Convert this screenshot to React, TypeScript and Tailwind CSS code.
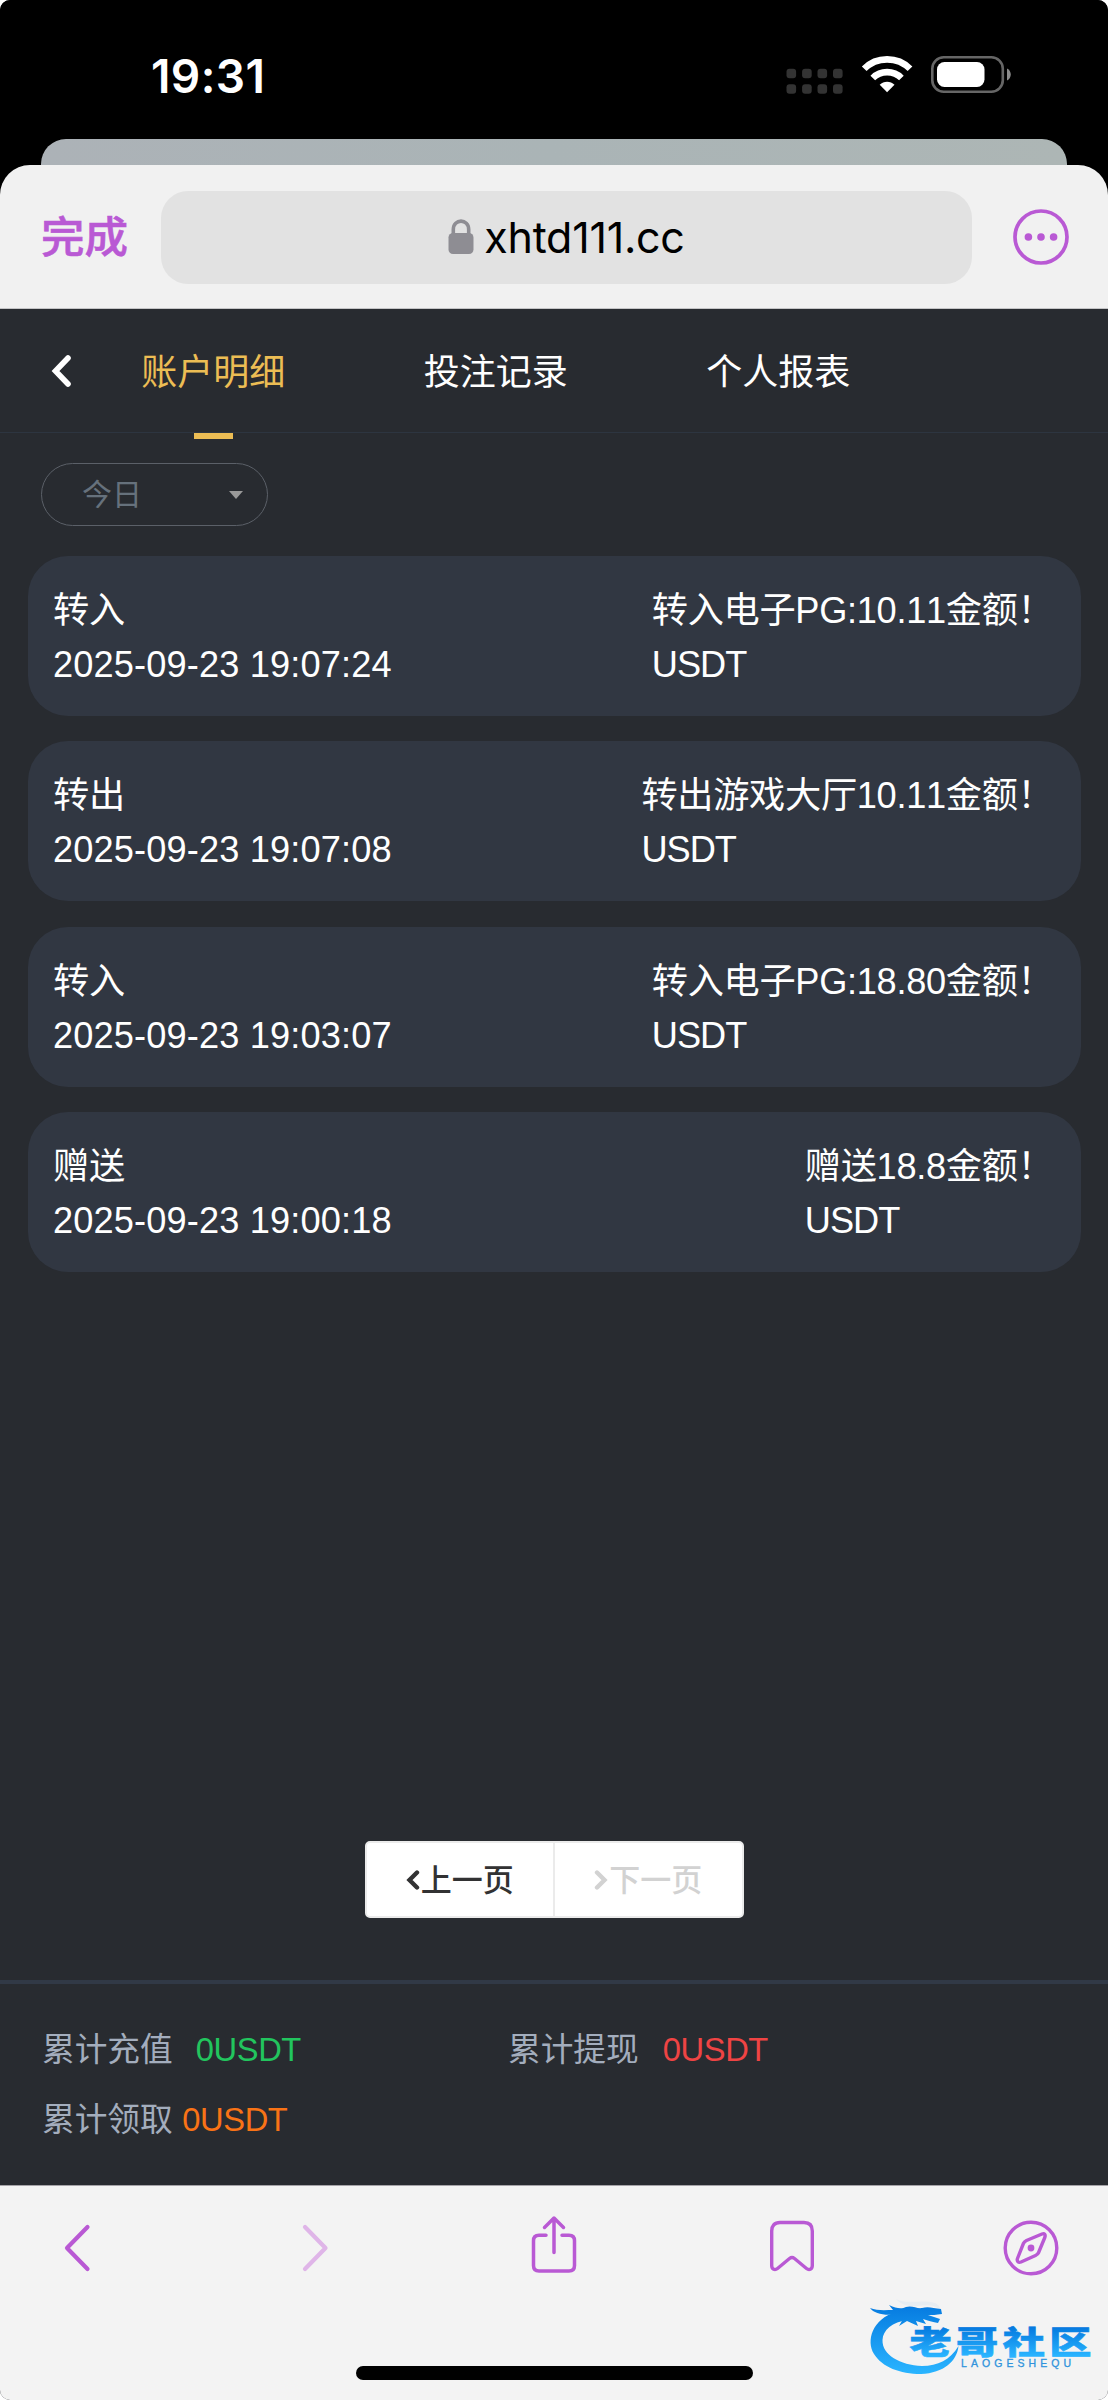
import { clsx } from "clsx";

type RecordItem = {
  type: string;
  time: string;
  text: string;
};

const tabs = ["账户明细", "投注记录", "个人报表"];

const records: RecordItem[] = [
  { type: "转入", time: "2025-09-23 19:07:24", text: "转入电子PG:10.11金额！" },
  { type: "转出", time: "2025-09-23 19:07:08", text: "转出游戏大厅10.11金额！" },
  { type: "转入", time: "2025-09-23 19:03:07", text: "转入电子PG:18.80金额！" },
  { type: "赠送", time: "2025-09-23 19:00:18", text: "赠送18.8金额！" },
];

function StatusBar() {
  return (
    <div className="flex h-[139px] items-start justify-between bg-black pr-[97px] pl-[151px]">
      <div className="mt-[48px] font-[Inter,sans-serif] text-[46px] leading-[56px] font-semibold tracking-[0.4px] text-white">
        19:31
      </div>
      <div className="mt-[54px] flex">
        <svg width="58" height="42" viewBox="0 0 58 42" fill="#333333">
          {[0, 15.6, 31, 46.5].map((x) => (
            <g key={x}>
              <rect x={x + 0.5} y="14.8" width="9.6" height="9.4" rx="3" />
              <rect x={x + 0.5} y="30.3" width="9.6" height="9.4" rx="3" />
            </g>
          ))}
        </svg>
        <svg className="ml-[17px]" width="52" height="42" viewBox="0 0 52 42">
          <g fill="none" stroke="#fff" strokeWidth="6.6">
            <path d="M3.2 14.8C15.6 2.2 36.6 2.2 49 14.8" />
            <path d="M11.8 24C19.6 16.2 32.6 16.2 40.4 24" />
          </g>
          <path d="M26.1 38.2L18.7 30.8C22.7 26.6 29.5 26.6 33.5 30.8Z" fill="#fff" />
        </svg>
        <svg className="ml-[18px]" width="80" height="42" viewBox="0 0 80 42">
          <rect x="1.3" y="3.2" width="70.5" height="34.6" rx="11.5" fill="none" stroke="#666" strokeWidth="2.6" />
          <rect x="6" y="8" width="47.5" height="25" rx="7.5" fill="#fff" />
          <path d="M76 14.5C81 16.5 81 24.5 76 26.5Z" fill="#8c8c8c" />
        </svg>
      </div>
    </div>
  );
}

function AddressBar() {
  return (
    <div className="h-[170px] bg-black">
      <div className="mx-[41px] h-[50px] rounded-t-[25px] bg-linear-to-r from-[#acb2b7] via-[#aab4b6] to-[#adb6b5]" />
      <div className="-mt-[24px] flex h-[144px] items-start rounded-t-[30px] border-b border-[#c4c4c6] bg-[#f1f1f1] pt-[26px]">
        <div className="ml-[41px] w-[120px] font-['Noto_Sans_CJK_SC',sans-serif] text-[43.5px] leading-[87px] font-medium text-[#b959d4] [-webkit-text-stroke:0.6px_#b959d4]">
          完成
        </div>
        <div className="flex h-[92.5px] w-[811px] items-center justify-center rounded-[27px] bg-[#e2e2e2]">
          <svg className="mr-[10px]" width="26" height="36" viewBox="0 0 26 36">
            <rect x="0.5" y="14" width="25" height="21" rx="4.5" fill="#8e8d93" />
            <path d="M5.3 16V10.5C5.3 -0.7 20.7 -0.7 20.7 10.5V16" fill="none" stroke="#8e8d93" strokeWidth="3.6" />
          </svg>
          <span className="font-[Inter,sans-serif] text-[43px] tracking-[-0.25px] text-black">xhtd111.cc</span>
        </div>
        <svg className="mt-[17px] ml-[40px]" width="58" height="58" viewBox="0 0 58 58" fill="#b959d4">
          <circle cx="29" cy="29" r="26" fill="none" stroke="#b959d4" strokeWidth="3.7" />
          <circle cx="16.4" cy="29" r="3.8" />
          <circle cx="29" cy="29" r="3.8" />
          <circle cx="41.6" cy="29" r="3.8" />
        </svg>
      </div>
    </div>
  );
}

function TabHeader() {
  return (
    <div className="flex h-[124px] border-b border-[#2d3540]">
      <svg className="mt-[45px] ml-[50px]" width="22" height="34" viewBox="0 0 22 34">
        <path d="M18 4L5.5 17L18 30" fill="none" stroke="#fff" strokeWidth="5.6" strokeLinecap="round" />
      </svg>
      {tabs.map((tab, i) => (
        <div
          key={tab}
          className={clsx(
            "relative flex w-[282.5px] justify-center text-[36px] leading-[128px]",
            i === 0 ? "text-[#ecbd54]" : "text-white"
          )}
        >
          {tab}
          {i === 0 && <span className="absolute -bottom-[7px] h-[6px] w-[39px] bg-[#ecbd54]" />}
        </div>
      ))}
    </div>
  );
}

function RecordCard({ item }: { item: RecordItem }) {
  return (
    <div className="flex h-[160px] justify-between rounded-[40px] bg-[#313742] pt-[28px] pr-[27px] pl-[25.5px] text-[36.2px] leading-[54px] text-white [font-kerning:none]">
      <div>
        <div className="tracking-[-0.3px]">{item.type}</div>
        <div className="tracking-[0.15px]">{item.time}</div>
      </div>
      <div>
        <div className="tracking-[-0.3px]">{item.text}</div>
        <div className="tracking-[-1px]">USDT</div>
      </div>
    </div>
  );
}

function Pagination() {
  return (
    <div className="mx-auto flex h-[77px] w-[379px] rounded-[5px] border-[2.5px] border-[#ebebeb] bg-white text-[31px] leading-[70px] font-medium">
      <div className="flex flex-1 items-center justify-center border-r-[2.5px] border-[#ebebeb] text-[#323233]">
        <svg className="mr-px" width="14" height="22" viewBox="0 0 14 22">
          <path d="M11 3.5L3.5 11L11 18.5" fill="none" stroke="currentColor" strokeWidth="4.4" strokeLinecap="round" />
        </svg>
        <span className="pt-[2px]">上一页</span>
      </div>
      <div className="flex flex-1 items-center justify-center text-[#d2d2d2]">
        <svg className="mr-px" width="14" height="22" viewBox="0 0 14 22">
          <path d="M3 3.5L10.5 11L3 18.5" fill="none" stroke="currentColor" strokeWidth="4.4" strokeLinecap="round" />
        </svg>
        <span className="pt-[2px]">下一页</span>
      </div>
    </div>
  );
}

function Totals() {
  return (
    <div className="h-[205px] border-t-4 border-[#313946] pt-[31px] pl-[42px] text-[32.7px] leading-[69.5px] text-[#a3adbd]">
      <div className="flex">
        <div className="w-[466px]">
          累计充值<span className="ml-[23px] tracking-[-0.4px] text-[#22c55e]">0USDT</span>
        </div>
        <div>
          累计提现<span className="ml-[24px] tracking-[-0.4px] text-[#ef4444]">0USDT</span>
        </div>
      </div>
      <div>
        累计领取<span className="ml-[9.5px] tracking-[-0.4px] text-[#f97316]">0USDT</span>
      </div>
    </div>
  );
}

function Watermark() {
  return (
    <svg className="absolute right-0 bottom-0" width="248" height="110" viewBox="860 2290 248 110">
      <defs>
        <linearGradient id="ring" gradientUnits="userSpaceOnUse" x1="0" y1="2306" x2="0" y2="2373">
          <stop offset="0" stopColor="#067be0" />
          <stop offset="1" stopColor="#29b4ff" />
        </linearGradient>
        <linearGradient id="word" gradientUnits="userSpaceOnUse" x1="0" y1="-26" x2="0" y2="2">
          <stop offset="0" stopColor="#067be0" />
          <stop offset="1" stopColor="#29b4ff" />
        </linearGradient>
      </defs>
      <g fill="url(#ring)">
        <path d="M896 2312C872 2319 866 2341 874 2354C882 2367 900 2374 921 2374C944 2373 957 2361 958.5 2346C950 2360 938 2366 922 2366C900 2365 882 2355 882.5 2340C883 2330 892 2322 908 2320Z" />
        <path d="M870 2308C877 2311 886 2310 893 2310L889 2305C897 2309 902 2309 906 2307C912 2305 917 2309 922 2308C928 2306 933 2308 941 2309L942 2314C936 2315 932 2315 928 2315L940 2319L938 2323C931 2322 927 2320 923 2319L926 2324L916 2321L918 2326L907 2321L899 2326L903 2319L890 2322L897 2314C886 2316 874 2314 870 2308Z" />
        <path d="M896 2299C907 2305 921 2299 935 2303C939 2305 941 2308 940 2310C934 2304 925 2305 917 2306C908 2307 900 2304 896 2299Z" opacity="0.05" />
      </g>
      <text
        transform="translate(909.5 2354) scale(1.34 1)"
        className="font-['Noto_Sans_CJK_SC',sans-serif] text-[31.5px] font-black"
        fill="url(#word)"
        stroke="url(#word)"
        strokeWidth="0.6"
        letterSpacing="3.3"
      >
        老哥社区
      </text>
      <text
        x="961"
        y="2366.5"
        className="font-['Liberation_Sans',sans-serif] text-[10.5px]"
        fill="#2f93dc"
        stroke="#2f93dc"
        strokeWidth="0.3"
        textLength="110"
      >
        LAOGESHEQU
      </text>
    </svg>
  );
}

function Toolbar() {
  return (
    <div className="relative h-[215px] border-t border-[#a5a3a8] bg-[#f3f3f3]">
      <div className="flex items-start pt-[29px] text-[#b959d4]">
        <svg className="ml-[61px]" width="32" height="66" viewBox="0 0 32 66">
          <path d="M26.5 12L6 33L26.5 54" fill="none" stroke="currentColor" strokeWidth="4.2" strokeLinecap="round" strokeLinejoin="round" />
        </svg>
        <svg className="ml-[207px]" width="32" height="66" viewBox="0 0 32 66">
          <path d="M5 12L25.5 33L5 54" fill="none" stroke="#dfb5e8" strokeWidth="4.2" strokeLinecap="round" strokeLinejoin="round" />
        </svg>
        <svg className="ml-[199px]" width="46" height="66" viewBox="0 0 46 66">
          <g fill="none" stroke="currentColor" strokeWidth="3.5" strokeLinecap="round" strokeLinejoin="round">
            <path d="M15 20.3H8C4.5 20.3 2.5 22.3 2.5 25.8V50.5C2.5 54 4.5 56 8 56H38C41.5 56 43.5 54 43.5 50.5V25.8C43.5 22.3 41.5 20.3 38 20.3H31" />
            <path d="M23 37.5V4M13.5 12.5L23 3L32.5 12.5" />
          </g>
        </svg>
        <svg className="ml-[192px]" width="46" height="66" viewBox="0 0 46 66">
          <path
            d="M11 7.5H35C40.5 7.5 43.3 10.5 43.3 16V50.5C43.3 54.5 40 55.5 37.5 53.5L25.5 43.5C23.5 42 22.5 42 20.5 43.5L8.5 53.5C6 55.5 2.7 54.5 2.7 50.5V16C2.7 10.5 5.5 7.5 11 7.5Z"
            fill="none"
            stroke="currentColor"
            strokeWidth="3.4"
          />
        </svg>
        <svg className="ml-[187.5px]" width="56" height="66" viewBox="0 0 56 66">
          <g fill="none" stroke="currentColor" strokeWidth="3.4" strokeLinejoin="round">
            <circle cx="28" cy="33" r="25.8" />
            <path d="M39 19L23.5 25.5C22 26.2 21 27 20.4 28.5L14.5 43.5C13.5 46.5 15.5 48 18 47L32.5 40.5C34 39.8 35 39 35.6 37.5L41.8 22.5C42.8 19.5 41.5 18 39 19Z" />
          </g>
          <circle cx="28" cy="33" r="3.4" fill="currentColor" />
        </svg>
      </div>
      <div className="mx-auto mt-[85px] h-[14px] w-[397px] rounded-full bg-black" />
      <Watermark />
    </div>
  );
}

export default function App() {
  return (
    <div className="w-[1108px] bg-white">
      <div className="h-[2400px] overflow-hidden rounded-[10px] bg-[#282b30]">
        <StatusBar />
        <AddressBar />
        <div className="flex h-[1876px] flex-col font-['Liberation_Sans','Noto_Sans_CJK_SC',sans-serif]">
          <TabHeader />
          <div className="mt-[30px] ml-[41px] flex h-[63px] w-[227px] shrink-0 items-center justify-between rounded-full border border-[#5b6068] pr-[24px] pl-[40px] text-[30px] leading-[60px] text-[#66717c]">
            今日
            <span className="border-x-[7px] border-t-[8px] border-x-transparent border-t-[#999999]" />
          </div>
          <div className="mt-[30px] flex flex-col gap-[25.4px] px-[27.5px]">
            {records.map((item) => (
              <RecordCard key={item.time} item={item} />
            ))}
          </div>
          <div className="mt-auto mb-[62px]">
            <Pagination />
          </div>
          <Totals />
        </div>
        <Toolbar />
      </div>
    </div>
  );
}
